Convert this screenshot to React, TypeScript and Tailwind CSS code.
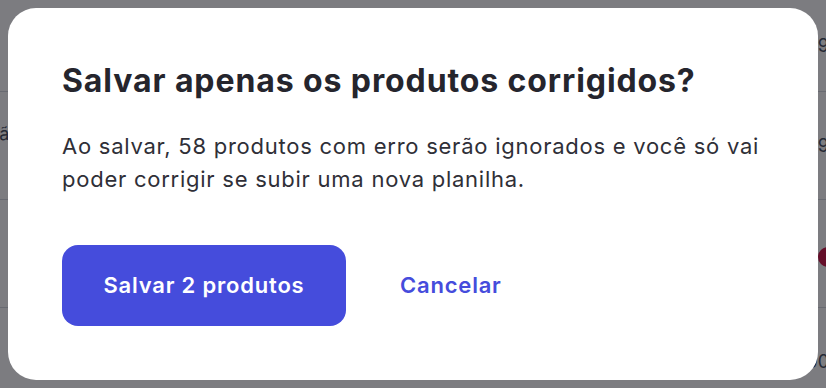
const rows = [
  { left: '', sub: '', right: 'R$ 19,99', dot: false },
  { left: 'Coleção', sub: 'Verão', right: 'R$ 29,99', dot: false },
  { left: '', sub: '', right: '', dot: true },
  { left: '', sub: '', right: 'R$ 10,00', dot: false },
];

function BackgroundTable() {
  return (
    <div className="flex w-full flex-col bg-white text-[18px] text-gray-700">
      {rows.map((row, index) => (
        <div
          key={index}
          className={
            index === 0
              ? 'flex h-[92px] items-center justify-between border-b border-gray-300'
              : 'flex h-[108px] items-center justify-between border-b border-gray-300'
          }
        >
          <div className="-ml-[50px] flex flex-col leading-6">
            <span>{row.left}</span>
            <span className="text-gray-400">{row.sub}</span>
          </div>
          {row.dot ? (
            <span className="-mr-[12px] mt-[6px] h-5 w-5 rounded-full bg-rose-700" />
          ) : (
            <span className="-mr-[3px]">{row.right}</span>
          )}
        </div>
      ))}
    </div>
  );
}

export default function App() {
  return (
    <div
      className="relative h-[388px] w-[826px] overflow-hidden"
      style={{ fontFamily: 'Inter, "Noto Sans", sans-serif' }}
    >
      <BackgroundTable />

      <div className="absolute inset-0 flex items-center justify-center bg-[#18181f]/[0.57]">
        <div className="w-[810px] rounded-[28px] bg-white px-[54px] pt-[54px] pb-[54px]">
          <h2 className="text-[32px] leading-[38px] font-bold tracking-[0.9px] text-[#25252d]">
            Salvar apenas os produtos corrigidos?
          </h2>
          <p className="mt-[30px] text-[22px] leading-[33px] tracking-[0.75px] text-[#2f2f37]">
            Ao salvar, 58 produtos com erro serão ignorados e você só vai
            poder corrigir se subir uma nova planilha.
          </p>
          <div className="mt-[49px] flex items-center gap-[54px]">
            <button className="h-[81px] w-[284px] rounded-[16px] bg-[#454cdc] text-[22px] font-semibold tracking-[0.8px] text-white">
              Salvar 2 produtos
            </button>
            <button className="text-[22px] font-semibold tracking-[0.8px] text-[#454cdc]">
              Cancelar
            </button>
          </div>
        </div>
      </div>
    </div>
  );
}
